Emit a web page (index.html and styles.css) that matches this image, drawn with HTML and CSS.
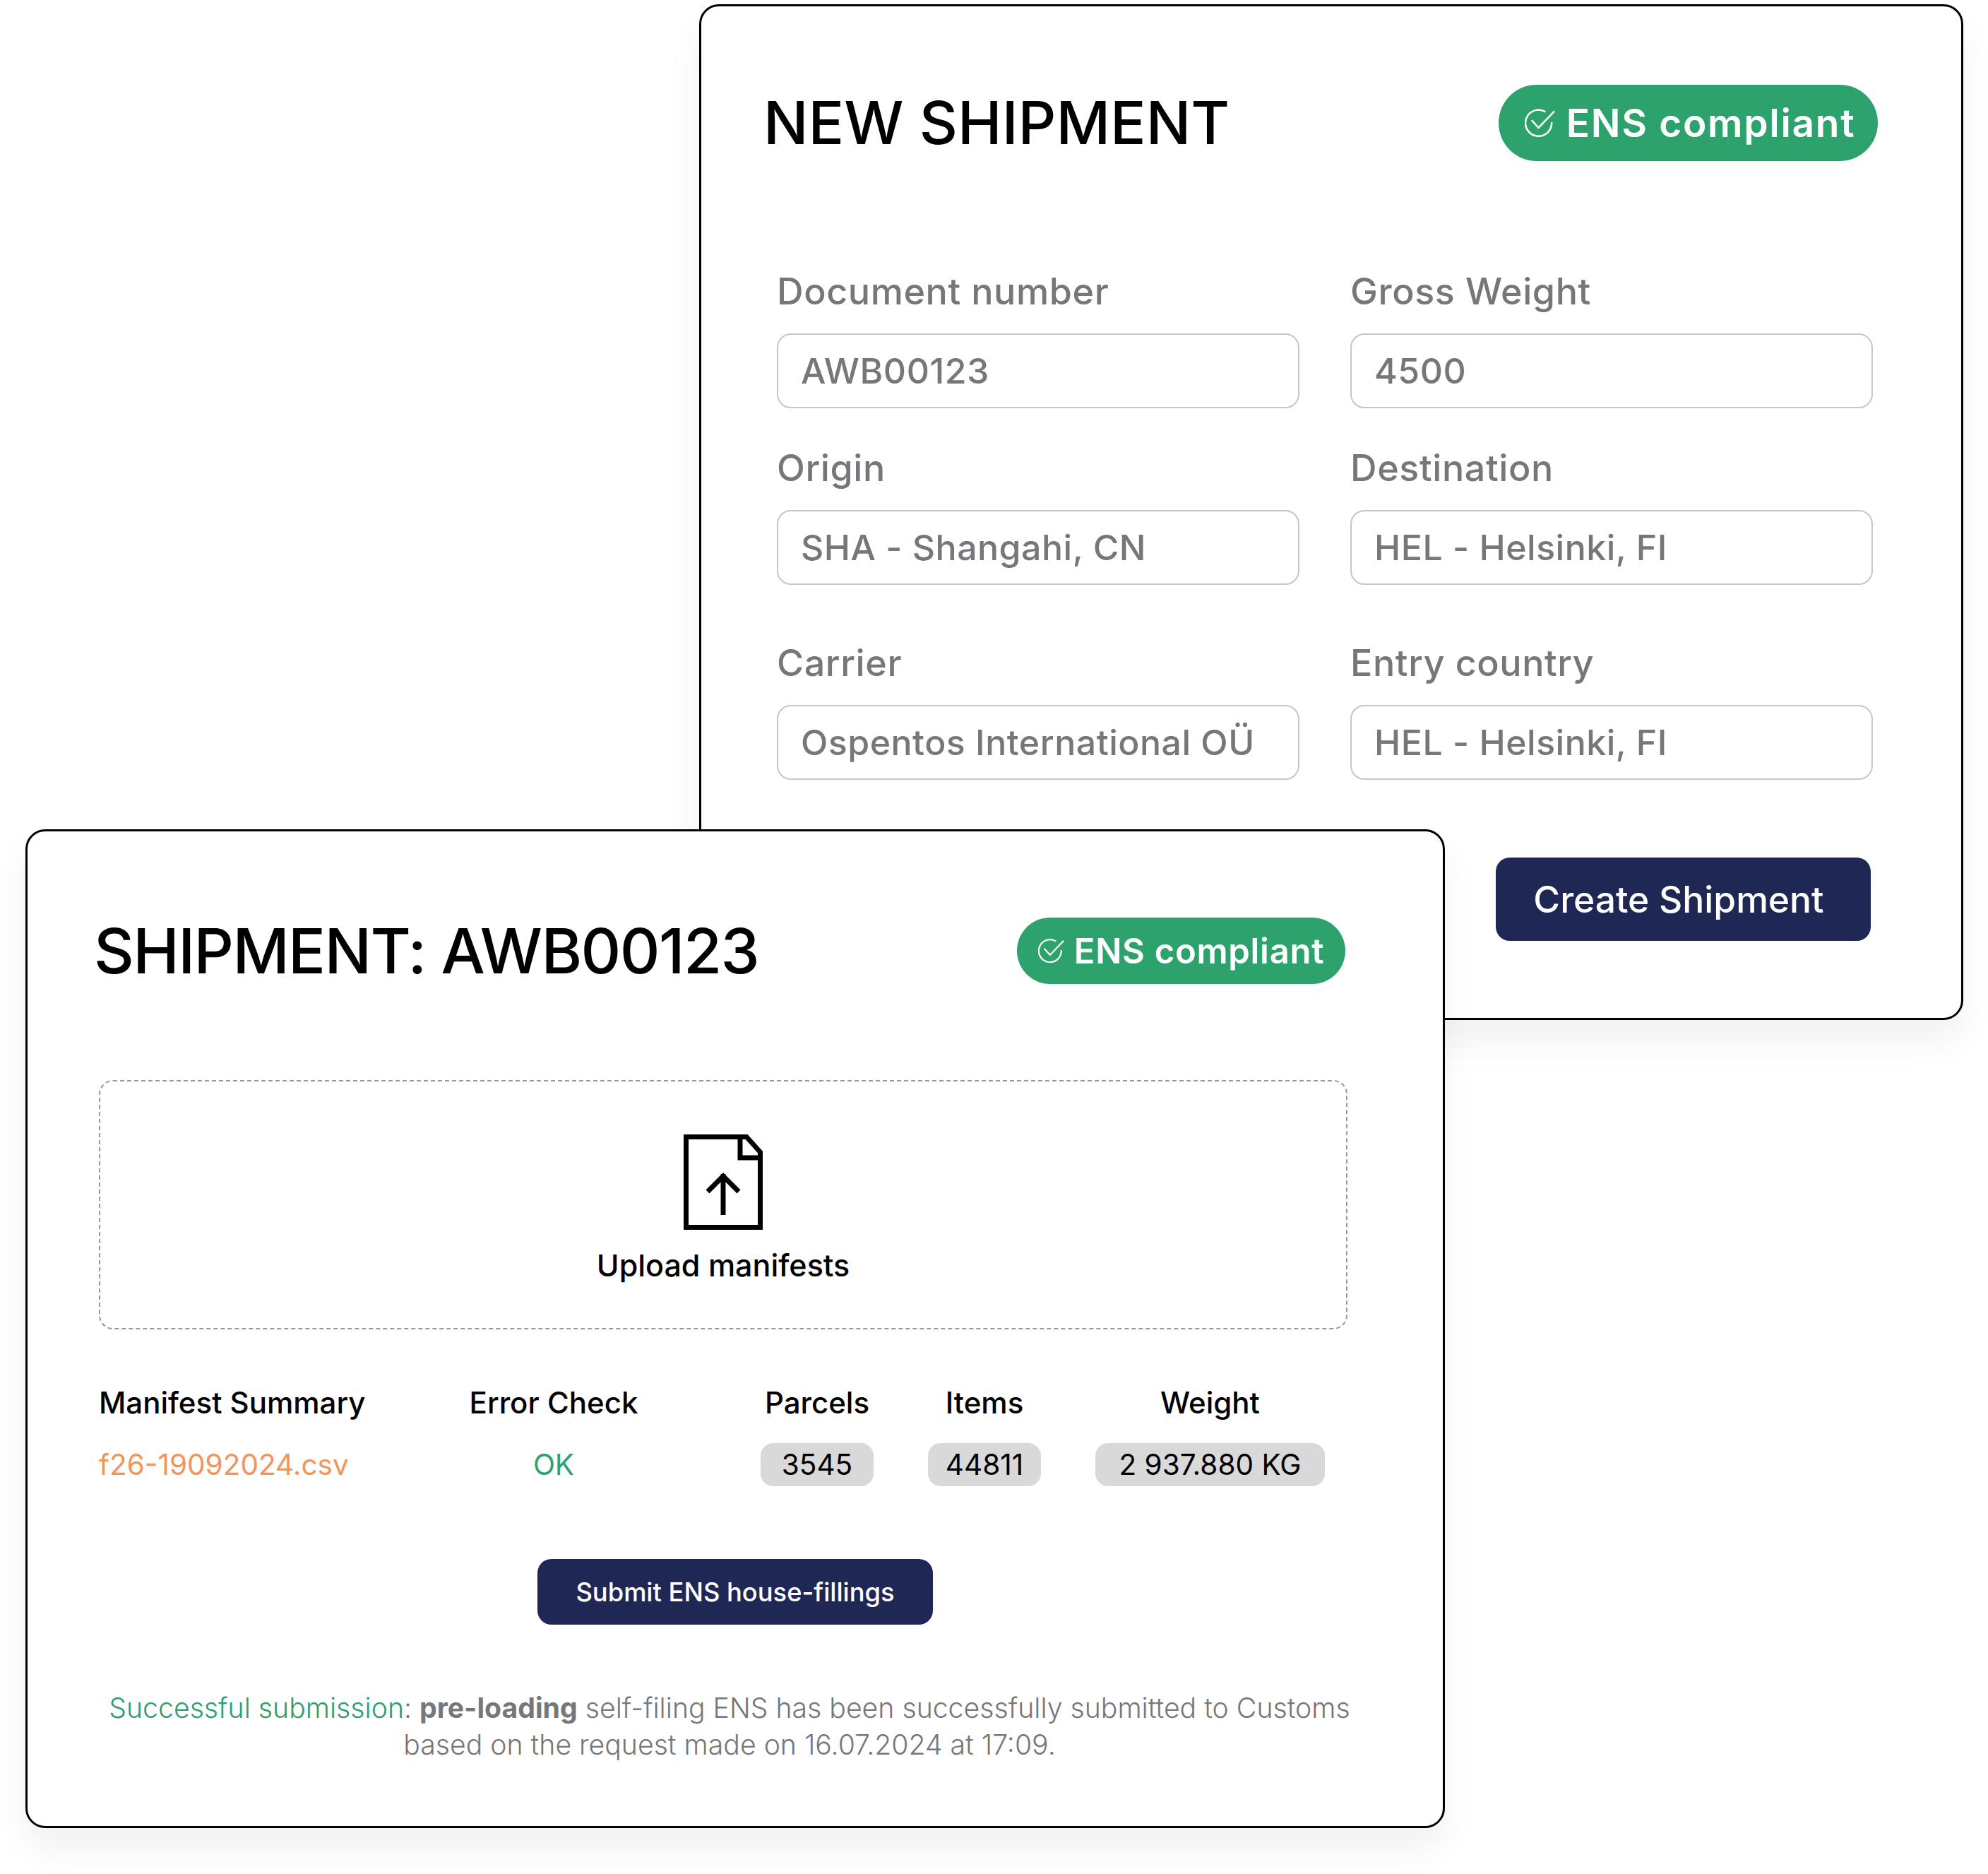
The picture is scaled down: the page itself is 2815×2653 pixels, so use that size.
FILE: index.html
```html
<html>

<head>
	<title>Shipments</title>
	<link rel="stylesheet" href="styles.css">
</head>

<body>
	<div class="canvas">
		<div class="card card--new">
			<div class="card__header card__header--new">
				<h1 class="card__title card__title--new">NEW SHIPMENT</h1>
				<div class="badge badge--large">
					<svg class="badge__icon" viewBox="0 0 44 40">
						<path d="M30 4A19 19 0 1 0 39 19M10 16L20 27L43 3" />
					</svg>
					<span>ENS compliant</span>
				</div>
			</div>
			<form class="form">
				<div class="form__group">
					<label class="input__label">Document number</label>
					<div class="input">AWB00123</div>
				</div>
				<div class="form__group">
					<label class="input__label">Gross Weight</label>
					<div class="input">4500</div>
				</div>
				<div class="form__group">
					<label class="input__label">Origin</label>
					<div class="input">SHA - Shangahi, CN</div>
				</div>
				<div class="form__group">
					<label class="input__label">Destination</label>
					<div class="input">HEL - Helsinki, FI</div>
				</div>
				<div class="form__group form__group--spaced">
					<label class="input__label">Carrier</label>
					<div class="input">Ospentos International OÜ</div>
				</div>
				<div class="form__group form__group--spaced">
					<label class="input__label">Entry country</label>
					<div class="input">HEL - Helsinki, FI</div>
				</div>
			</form>
			<div class="form__actions">
				<button type="button" class="button button--large">Create Shipment</button>
			</div>
		</div>

		<div class="card card--detail">
			<div class="card__header card__header--detail">
				<h1 class="card__title card__title--detail">SHIPMENT: AWB00123</h1>
				<div class="badge badge--small">
					<svg class="badge__icon" viewBox="0 0 44 40">
						<path d="M30 4A19 19 0 1 0 39 19M10 16L20 27L43 3" />
					</svg>
					<span>ENS compliant</span>
				</div>
			</div>
			<div class="upload">
				<svg class="upload__icon" viewBox="0 0 112 135">
					<path d="M3.5 3.5H89L108.5 25V131.5H3.5Z" />
					<path d="M80 3.5V33H108.5" />
					<path d="M56 114V56M34 81L56 59L78 81" />
				</svg>
				<p class="upload__text">Upload manifests</p>
			</div>
			<div class="summary">
				<div class="summary__head summary__head--left">Manifest Summary</div>
				<div class="summary__head">Error Check</div>
				<div class="summary__head">Parcels</div>
				<div class="summary__head">Items</div>
				<div class="summary__head">Weight</div>
				<div class="summary__file">f26-19092024.csv</div>
				<div class="summary__ok">OK</div>
				<div class="pill pill--parcels">3545</div>
				<div class="pill pill--items">44811</div>
				<div class="pill pill--weight">2 937.880 KG</div>
			</div>
			<div class="card__actions">
				<button type="button" class="button button--small">Submit ENS house-fillings</button>
			</div>
			<p class="notice">
				<span class="notice__ok">Successful submission</span>: <b>pre-loading</b> self-filing ENS has been successfully submitted to Customs<br>
				based on the request made on 16.07.2024 at 17:09.
			</p>
		</div>
	</div>
</body>

</html>
```
FILE: styles.css
```css
* {
	margin: 0;
	padding: 0;
	box-sizing: border-box;
}

body {
	background-color: #fff;
	font-family: Inter, "Liberation Sans", sans-serif;
}

.canvas {
	position: relative;
	width: 2815px;
	height: 2653px;
	overflow: hidden;
}

.card {
	position: absolute;
	background-color: #fff;
	border: 3px solid #000;
	border-radius: 28px;
	box-shadow: 0 30px 50px rgba(0, 0, 0, 0.055);
}

.card--new {
	left: 990px;
	top: 6px;
	width: 1790px;
	height: 1438px;
	padding: 111px 118px 0 88px;
}

.card--detail {
	left: 36px;
	top: 1174px;
	width: 2010px;
	height: 1414px;
	padding-top: 122px;
}

.card__header {
	display: flex;
	align-items: center;
	justify-content: space-between;
}

.card__header--detail {
	padding: 0 138px 0 94px;
}

.card__title {
	font-weight: 500;
	line-height: 1;
	color: #000;
	white-space: nowrap;
}

.card__title--new {
	font-size: 84px;
}

.card__title--detail {
	font-size: 88px;
	letter-spacing: -1.6px;
}

.badge {
	display: flex;
	align-items: center;
	justify-content: center;
	background-color: #2da26d;
	color: #fff;
	font-weight: 600;
	white-space: nowrap;
}

.badge--large {
	width: 537px;
	height: 108px;
	gap: 16px;
	padding-left: 5px;
	border-radius: 54px;
	font-size: 55px;
	letter-spacing: 1.7px;
}

.badge--small {
	width: 465px;
	height: 94px;
	gap: 14px;
	border-radius: 47px;
	font-size: 49px;
	letter-spacing: 0.7px;
}

.badge__icon {
	width: 43px;
	height: 40px;
	fill: none;
	stroke: #fff;
	stroke-width: 2.6;
}

.badge--small .badge__icon {
	width: 37px;
	height: 34px;
}

.form {
	display: grid;
	grid-template-columns: 740px 740px;
	column-gap: 72px;
	row-gap: 55px;
	margin: 155px 0 0 19px;
}

.form__group--spaced {
	margin-top: 26px;
}

.form__actions {
	display: flex;
	justify-content: flex-end;
	margin-top: 110px;
	padding-right: 10px;
}

.input__label {
	display: block;
	height: 60px;
	margin-bottom: 29px;
	font-size: 52px;
	font-weight: 500;
	line-height: 60px;
	letter-spacing: 0.6px;
	color: #75777a;
}

.input {
	height: 106px;
	padding: 0 32px;
	border: 2px solid #c6c6c6;
	border-radius: 20px;
	font-size: 50px;
	font-weight: 500;
	line-height: 102px;
	letter-spacing: 0.5px;
	color: #75777a;
	white-space: nowrap;
}

.button {
	background-color: #1f2855;
	color: #fff;
	border: none;
	font-family: inherit;
	font-weight: 500;
}

.button--large {
	width: 531px;
	height: 118px;
	padding-right: 13px;
	border-radius: 20px;
	font-size: 51.5px;
}

.button--small {
	width: 560px;
	height: 93px;
	border-radius: 20px;
	font-size: 36.3px;
}

.upload {
	display: flex;
	flex-direction: column;
	align-items: center;
	height: 353px;
	margin: 136px 135px 0 101px;
	padding-top: 75px;
	border: 2px dashed #999;
	border-radius: 20px;
}

.upload__icon {
	width: 112px;
	height: 135px;
	fill: none;
	stroke: #000;
	stroke-width: 7;
}

.upload__text {
	margin-top: 24px;
	font-size: 43px;
	line-height: 52px;
	font-weight: 500;
	color: #000;
}

.summary {
	display: grid;
	grid-template-columns: 428px 432px 314px 160px 479px;
	grid-template-rows: 60px 61px;
	row-gap: 28px;
	align-items: center;
	justify-items: center;
	margin: 73px 0 0 101px;
	font-size: 40.5px;
	color: #000;
}

.summary__head {
	font-size: 42px;
	font-weight: 500;
	white-space: nowrap;
}

.summary__head--left,
.summary__file {
	justify-self: start;
}

.summary__file {
	color: #f0965c;
	white-space: nowrap;
}

.summary__ok {
	color: #2da26d;
}

.pill {
	height: 61px;
	border-radius: 18px;
	background-color: #d9d9d9;
	line-height: 61px;
	text-align: center;
	white-space: nowrap;
}

.pill--parcels,
.pill--items {
	width: 160px;
}

.pill--weight {
	width: 325px;
}

.card__actions {
	display: flex;
	justify-content: center;
	margin-top: 103px;
}

.notice {
	margin-top: 92px;
	padding-right: 16px;
	font-size: 39.2px;
	line-height: 52px;
	font-weight: 300;
	text-align: center;
	color: #75777a;
	white-space: nowrap;
}

.notice__ok {
	color: #2f9e6a;
}

.notice b {
	font-weight: 700;
}
```
